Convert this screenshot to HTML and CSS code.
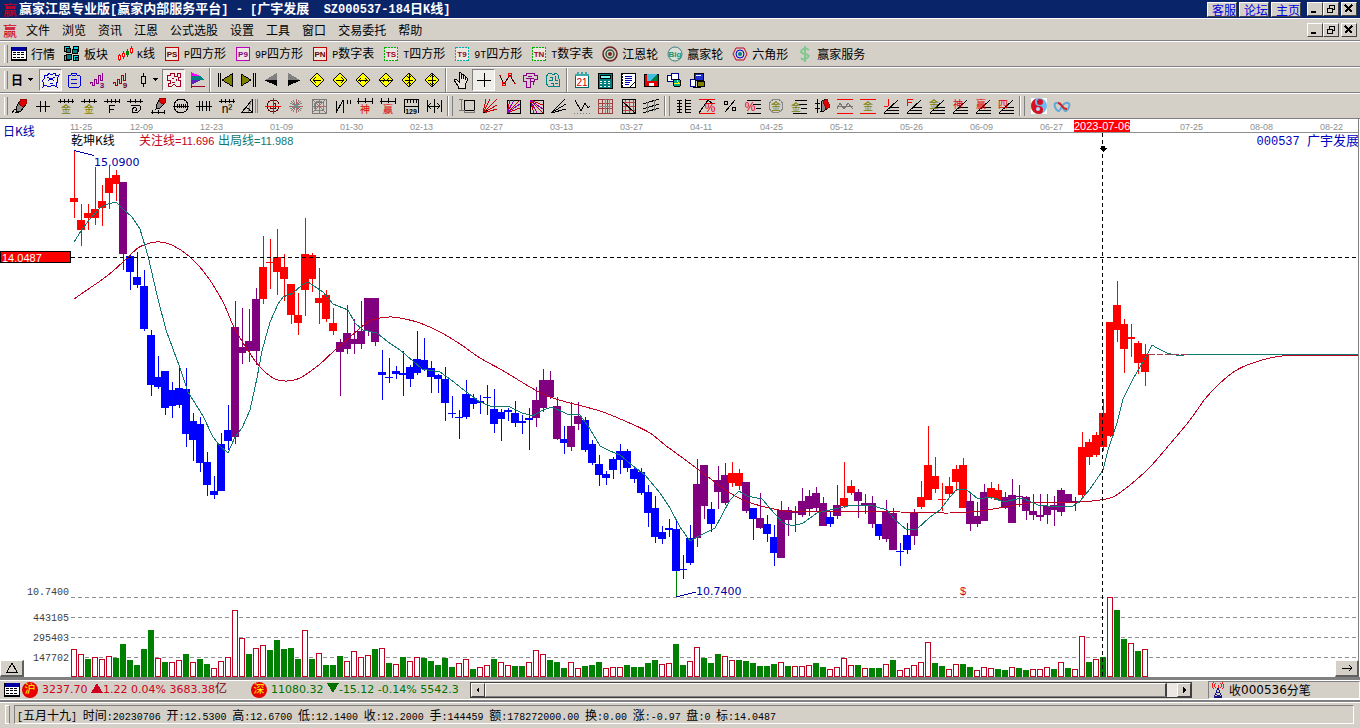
FILE: index.html
```
<!DOCTYPE html>
<html lang="zh-CN">
<head>
    <meta charset="UTF-8">
    <meta name="viewport" content="width=device-width, initial-scale=1.0">
    <title>赢家江恩专业版</title>
    <link rel="stylesheet" href="styles.css">
</head>
<body>
    <header class="titlebar">
        <span class="logo">赢</span>
        <h1>赢家江恩专业版<i>[</i>赢家内部服务平台<i>] - [</i>广宇发展<i>&nbsp; SZ000537-184</i>日<i>K</i>线<i>]</i></h1>
        <nav class="title-links">
            <a href="#">客服</a>
            <a href="#">论坛</a>
            <a href="#">主页</a>
        </nav>
        <div class="win-buttons">
            <button aria-label="最小化"><svg viewBox="0 0 10 10"><path d="M1 8h5" stroke-width="2"/></svg></button>
            <button aria-label="还原"><svg viewBox="0 0 10 10"><path d="M3 1h6M3.500 1v3M8.500 1v5M6 5.500h3M1 4h6M1.500 4v5M6.500 4v5M1 8.500h6"/></svg></button>
            <button class="close" aria-label="关闭"><svg viewBox="0 0 10 10"><path d="M1 1l7 7M8 1l-7 7" stroke-width="2"/></svg></button>
        </div>
    </header>

    <nav class="menubar">
        <span class="logo">赢</span>
        <button>文件</button>
        <button>浏览</button>
        <button>资讯</button>
        <button>江恩</button>
        <button>公式选股</button>
        <button>设置</button>
        <button>工具</button>
        <button>窗口</button>
        <button>交易委托</button>
        <button>帮助</button>
        <div class="win-buttons">
            <button aria-label="最小化"><svg viewBox="0 0 10 10"><path d="M1 8h5" stroke-width="2"/></svg></button>
            <button aria-label="还原"><svg viewBox="0 0 10 10"><path d="M3 1h6M3.500 1v3M8.500 1v5M6 5.500h3M1 4h6M1.500 4v5M6.500 4v5M1 8.500h6"/></svg></button>
            <button class="close" aria-label="关闭"><svg viewBox="0 0 10 10"><path d="M1 1l7 7M8 1l-7 7" stroke-width="2"/></svg></button>
        </div>
    </nav>

    <div class="toolbar labels">
        <button><svg viewBox="0 0 16 16"><path d="M0 1h16v13H0z" fill="#fff"/><path d="M0 1h16v3H0z" fill="#0000a0" stroke="#0000a0"/><path d="M.5 1v13M15.500 1v13M0 13.500h16" /><path d="M2 6.500h12M2 8.500h12M2 11.500h12" stroke-dasharray="3 1"/></svg>行情</button>
        <button><svg viewBox="0 0 16 16"><path d="M.5 .5h5v5h-5zM9.500 .5h5v5h-5zM.5 9.500h5v5h-5zM9.500 9.500h5v5h-5z" fill="#00e0e0"/><path d="M2.500 2.500h4v4h-4zM8.500 3.500h5v4h-5zM2.500 8.500h5v5h-5zM11.500 11.500h3v3h-3z" fill="#008080"/></svg>板块</button>
        <button><svg viewBox="0 0 16 16"><path d="M2.500 8v7M6.500 5v8M14.500 0v8" stroke="red"/><path d="M1.500 9.500h2v4h-2zM5.500 7.500h2v3h-2zM13.500 2.500h2v4h-2z" fill="#fff" stroke="red"/><path d="M10.500 3v8M9.500 5.500h2v3h-2z" fill="green" stroke="green"/></svg><span><i>K</i>线</span></button>
        <button><svg viewBox="0 0 16 16"><path d="M1.500 1.500h13v13h-13z" stroke="#c00000" fill="#ece8e0"/><text x="8" y="11" fill="#600000">PS</text></svg><span><i>P</i>四方形</span></button>
        <button><svg viewBox="0 0 16 16"><path d="M1.500 1.500h13v13h-13z" stroke="#c000c0" fill="#ece8e0"/><text x="8" y="11" fill="#800080">P9</text></svg><span><i>9P</i>四方形</span></button>
        <button><svg viewBox="0 0 16 16"><path d="M1.500 1.500h13v13h-13z" stroke="#c00000" fill="#ece8e0"/><text x="8" y="11" fill="#600000">PN</text></svg><span><i>P</i>数字表</span></button>
        <button><svg viewBox="0 0 16 16"><path d="M1.500 1.500h13v13h-13z" stroke="#00b000" stroke-dasharray="2 1" fill="#ece8e0"/><text x="8" y="11" fill="#a00020">TS</text></svg><span><i>T</i>四方形</span></button>
        <button><svg viewBox="0 0 16 16"><path d="M1.500 1.500h13v13h-13z" stroke="#00b0b0" stroke-dasharray="2 1" fill="#ece8e0"/><text x="8" y="11" fill="#a00020">T9</text></svg><span><i>9T</i>四方形</span></button>
        <button><svg viewBox="0 0 16 16"><path d="M1.500 1.500h13v13h-13z" stroke="#00b000" stroke-dasharray="2 1" fill="#ece8e0"/><text x="8" y="11" fill="#a00020">TN</text></svg><span><i>T</i>数字表</span></button>
        <button><svg class="smooth" viewBox="0 0 16 16"><circle cx="8" cy="8" r="7" stroke="#702020" stroke-width="1.500"/><circle cx="8" cy="8" r="4" stroke="#306040" stroke-width="1.500"/><circle cx="8" cy="8" r="1" stroke="#802020" stroke-width="2"/></svg>江恩轮</button>
        <button><svg class="smooth" viewBox="0 0 16 16"><circle cx="8" cy="8" r="7" stroke="#408080" fill="#d8e0d8"/><text x="8" y="11" fill="#209070">Big</text></svg>赢家轮</button>
        <button><svg class="smooth" viewBox="0 0 16 16"><path d="M1 8l3-6h8l3 6-3 6H4z" stroke="#c00020"/><circle cx="8" cy="8" r="4" stroke="#0000d0"/><circle cx="8" cy="8" r="1" stroke="#008080" stroke-width="2"/></svg>六角形</button>
        <button><svg class="smooth" viewBox="0 0 16 16"><path d="M12 4Q8 1 5 4T8 8T10 12T4 12M8 0V16" stroke="#80c890" stroke-width="2"/></svg>赢家服务</button>
    </div>

    <div class="toolbar icons">
        <button class="drop wide"><b>日</b><svg class="caret" viewBox="0 0 6 4"><path d="M0 0h6L3 3z"/></svg></button>
        <button class="on" aria-label="星座"><svg viewBox="0 0 18 18"><path d="M2 4l3 1 2-3 2 2 4-2 1 3 3-1-2 4 1 3-2 1 1 4-4-2-4 2-4-2-2 2 1-4-2-2 2-2zM5 6l4 2 4-2M6 10q3-3 6 0M8 12h3" stroke="#00c"/></svg></button>
        <button aria-label="剪贴板"><svg viewBox="0 0 18 18"><path d="M4 4h2l1-2h4l1 2h2l1 1v10l-1 1H4l-1-1V5zM7 4h4M6 8h6M6 12h6" stroke="#00d"/></svg></button>
        <button aria-label="三周期"><svg viewBox="0 0 18 18"><path d="M2 13v-2h2v3h2V8h2v4h2V4h2v5h2V2" stroke="#808"/><text x="14" y="17" fill="#606">3</text></svg></button>
        <button aria-label="九周期"><svg viewBox="0 0 18 18"><path d="M2 13v-2h2v3h2V8h2v4h2V4h2v5h2V2" stroke="#a00"/><text x="14" y="17" fill="#600">9</text></svg></button>
        <button class="drop"><svg viewBox="0 0 12 18"><path d="M7.500 2v3M7.500 13v3M5.500 5.500h4v7h-4z"/></svg><svg class="caret" viewBox="0 0 6 4"><path d="M0 0h6L3 3z"/></svg></button>
        <button class="on" aria-label="地图"><svg viewBox="0 0 18 18"><path d="M2 4h3V2h4v3h3V2h3v4h-2v3h2v6h-4l-2-2-2 2H3v-3h2V9H2zM7 7h2M11 8v2M7 11h3" stroke="#a00020"/></svg></button>
        <button aria-label="筹码"><svg viewBox="0 0 18 18"><path d="M3 1v16M3 15h14" stroke="#a00020"/><path d="M3 1l9 4H3z" fill="#f0f" stroke="none"/><path d="M3 5h9l5 4H3z" fill="#008080" stroke="none"/><path d="M3 9h10l-10 5z" fill="#6020c0" stroke="none"/></svg></button>
        <span class="sep"></span>
        <button aria-label="首条"><svg viewBox="0 0 18 18"><path d="M2 2v14M4 2v14"/><path d="M16 3v12L6 9z" fill="#808000"/></svg></button>
        <button aria-label="末条"><svg viewBox="0 0 18 18"><path d="M14 2v14M16 2v14"/><path d="M2 3v12l10-6z" fill="#808000"/></svg></button>
        <button aria-label="左移"><svg viewBox="0 0 18 18"><path d="M15 2v7H3z" fill="#808080" stroke="none"/><path d="M2 9h13v6z" fill="#000" stroke="none"/></svg></button>
        <button aria-label="右移"><svg viewBox="0 0 18 18"><path d="M3 2v7h12z" fill="#808080" stroke="none"/><path d="M16 9H3v6z" fill="#000" stroke="none"/></svg></button>
        <button aria-label="向左"><svg viewBox="0 0 18 18"><path d="M9 2l7 7-7 7-7-7z" fill="#ff0"/><path d="M5 9h8M8 6L5 9l3 3"/></svg></button>
        <button aria-label="向右"><svg viewBox="0 0 18 18"><path d="M9 2l7 7-7 7-7-7z" fill="#ff0"/><path d="M5 9h8M10 6l3 3-3 3"/></svg></button>
        <button aria-label="横向拉伸"><svg viewBox="0 0 18 18"><path d="M9 2l7 7-7 7-7-7z" fill="#ff0"/><path d="M4 9h10M7 7L5 9l2 2M11 7l2 2-2 2"/></svg></button>
        <button aria-label="横向压缩"><svg viewBox="0 0 18 18"><path d="M9 2l7 7-7 7-7-7z" fill="#ff0"/><path d="M3 9h12M6 7l2 2-2 2M12 7l-2 2 2 2"/></svg></button>
        <button aria-label="纵向压缩"><svg viewBox="0 0 18 18"><path d="M9 2l7 7-7 7-7-7z" fill="#ff0"/><path d="M9 3v12M5 9h8M7 5l2 2 2-2M7 13l2-2 2 2"/></svg></button>
        <button aria-label="纵向拉伸"><svg viewBox="0 0 18 18"><path d="M9 2l7 7-7 7-7-7z" fill="#ff0"/><path d="M9 3v12M5 9h8M7 6l2-2 2 2M7 12l2 2 2-2"/></svg></button>
        <span class="sep dark"></span>
        <button aria-label="拖动"><svg viewBox="0 0 18 18"><path d="M7 11L4 8 2 9l4 6v2h7v-3l2-4V7l-2-1v3-4l-2-1v4-5L9 3v5-6L7 1z" fill="#e8e4dc"/></svg></button>
        <button class="on" aria-label="十字光标"><svg viewBox="0 0 18 18"><path d="M9 2v14M2 9h14"/></svg></button>
        <button aria-label="连线"><svg viewBox="0 0 18 18"><path d="M2 5l4 8 6-9 5 9" stroke="#400"/><circle cx="6" cy="13" r="2" stroke="red"/><circle cx="12" cy="4" r="2" stroke="red"/><path d="M1 4h2M16 12h2" stroke="red"/></svg></button>
        <button aria-label="标注"><svg viewBox="0 0 18 18"><path d="M5 2h8v2h3v4h-3v2H9v6H5v-6H2V4h3zM7 5h4M5 7h8M9 7v3h3v4" stroke="#808"/></svg></button>
        <button aria-label="云图"><svg viewBox="0 0 18 18"><path d="M4 3l3-1 2 2 3-2 2 2v3l2 2-1 3 1 3-4 1-2-1-3 1-3-1-2-3 1-3-1-3zM6 6h2v3H5M11 5v4h3M7 12h2v3M11 12h3" stroke="#008080"/></svg></button>
        <span class="sep"></span>
        <button aria-label="日历"><svg viewBox="0 0 18 18"><path d="M2.500 4.500h13v12h-13z" fill="#fff" stroke="#066"/><path d="M2 4h14M4 2h2M8 2h2M12 2h2" stroke="#40a8a8" stroke-width="2"/><text class="day" x="9" y="15" fill="#d00000">21</text></svg></button>
        <button aria-label="计算器"><svg viewBox="0 0 18 18"><path d="M2 2h14v15H2z" fill="#008080"/><path d="M4 4h10v3H4z" fill="#7ff"/><path d="M4 10h2M8 10h2M12 10h2M4 12h2M8 12h2M12 12h2M4 15h2M8 15h2M12 15h2" stroke="#fff"/></svg></button>
        <button aria-label="记事本"><svg viewBox="0 0 18 18"><path d="M2 2h14v14H2z" fill="#fff"/><path d="M3 2v14" stroke-width="2" stroke-dasharray="2 1"/><path d="M6 5h7M6 7h7M6 9h7M6 11h5M6 13h4" stroke="#00a"/><path d="M16 11l-5 5"/></svg></button>
        <button aria-label="保存"><svg viewBox="0 0 18 18"><path d="M2 3h14v12H2z" fill="#e00000"/><path d="M5 3h10v7H5z" fill="#40c0e0" stroke="none"/><path d="M15 3v7H8z" fill="#008040" stroke="none"/><path d="M7 12h5v3H7z" fill="#fff" stroke="none"/></svg></button>
        <button aria-label="发送"><svg viewBox="0 0 18 18"><path d="M2 4h7v6H2z" fill="#fff" stroke="#008"/><path d="M6 2h7v6H6z" fill="#fff" stroke="#008"/><circle cx="12" cy="12" r="4" fill="#0a8"/><path d="M9 12h6M12 9l2 4" stroke="#ff0"/></svg></button>
        <button aria-label="联网"><svg viewBox="0 0 18 18"><path d="M6 2h9v7H6z" fill="#2030d0"/><path d="M8 4h5" stroke="#fff"/><path d="M2 8h5v7H2z" fill="#fff" stroke="#008"/><path d="M9 10h7v5H9z" fill="#808000"/><path d="M5 16h8"/></svg></button>
    </div>

    <div class="toolbar icons draw">
        <button aria-label="画笔"><svg viewBox="0 0 18 18"><path d="M10 2h5v5l-5 7-5 1 1-6z" fill="#888"/><path d="M10 2h5v5l-3 3-4-3z" fill="#e00000" stroke="#a00000"/><path d="M1 16q4-7 5 0l3-2"/></svg></button>
        <button aria-label="三等分"><svg viewBox="0 0 18 18"><path d="M2 9h14M6 4v11M11 4v11"/></svg></button>
        <button aria-label="金分割"><svg viewBox="0 0 18 18"><path d="M1 4h16M3 2v4M7 2v4M11 2v4M15 2v4"/><text class="han" fill="#808000" x="9" y="16">金</text></svg></button>
        <button aria-label="金分割二"><svg viewBox="0 0 18 18"><path d="M1 4h16M4 2v4M9 2v4M14 2v4"/><text class="han" fill="#808000" x="9" y="16">金</text></svg></button>
        <button aria-label="斐波那契"><svg viewBox="0 0 18 18"><path d="M1 4h16M4 2v4M8 2v4M12 2v4M16 2v4M6 16V8h6M6 12h5"/></svg></button>
        <button aria-label="螺旋"><svg viewBox="0 0 18 18"><path d="M1 4h16M4 2v4M9 2v4M14 2v4M5 8h8q4 4-1 7-5 2-6-1 0-4 4-3 2 2-1 3"/></svg></button>
        <button aria-label="画尺"><svg viewBox="0 0 18 18"><path d="M2 15h14M3 13v4M9 13v4M15 13v4"/><path d="M11 1h5v5l-5 5-4 1 1-5z" fill="#888"/><path d="M11 1h5v5l-3 1-3-3z" fill="#e00000" stroke="#a00000"/></svg></button>
        <button aria-label="圆周"><svg viewBox="0 0 18 18"><circle cx="9" cy="9" r="7"/><path d="M1 9h16M5 7v4M7 7v4M9 7v4M11 7v4M13 7v4"/></svg></button>
        <button aria-label="四等分"><svg viewBox="0 0 18 18"><path d="M1 9h16M4 4v10M7 4v10M11 4v10M14 4v10"/></svg></button>
        <button aria-label="平方"><svg viewBox="0 0 18 18"><path d="M1 4h16M3 2v4M7 2v4M11 2v4M15 2v4"/><text class="big" x="9" y="16">n²</text></svg></button>
        <button aria-label="三角"><svg viewBox="0 0 18 18"><path d="M1 15L11 3v12zM5 10l6 5"/><path d="M14 2v14M16 2v14M11 2L7 15" stroke="#888"/></svg></button>
        <button aria-label="圆心"><svg viewBox="0 0 18 18"><path d="M9 3a6 6 0 1 0 6 6M9 6a3 3 0 1 1-3 3M9 3q5 0 6 4" stroke="#600000"/><path d="M1 9h16M9 1v16" stroke="red"/></svg></button>
        <button aria-label="放射"><svg viewBox="0 0 18 18"><path d="M9 2v14M2 9h14M4 4l10 10M14 4L4 14" stroke="#b06060"/><path d="M6 3l6 12M12 3L6 15M3 6l12 6M15 6L3 12" stroke="#709090"/></svg></button>
        <button aria-label="方圆"><svg viewBox="0 0 18 18"><path d="M2 2h14v14H2zM5 5h8v8H5z" stroke="#777"/><path d="M2 2l14 14M16 2L2 16M9 2v14M2 9h14" stroke="#a07070"/><circle cx="9" cy="9" r="5" stroke="#788"/></svg></button>
        <button aria-label="波段"><svg viewBox="0 0 18 18"><path d="M3 4v12L10 3v13M14 3v4M17 3v4"/></svg></button>
        <button aria-label="神分割"><svg viewBox="0 0 18 18"><path d="M1 4h16M2 1v6M9 1v5M16 1v6"/><text class="han" x="9" y="16" fill="#e00000">神</text></svg></button>
        <button aria-label="赢分割"><svg viewBox="0 0 18 18"><path d="M1 4h16M2 1v6M9 1v5M16 1v6"/><text class="han" x="9" y="16" fill="#e00000">赢</text></svg></button>
        <button aria-label="标尺"><svg viewBox="0 0 18 18"><path d="M2 2h14M2 9h14M2 2v14M16 2v14M5 2v4M8 2v4M11 2v4M14 2v4"/><text class="tiny" x="9" y="17">129</text></svg></button>
        <button aria-label="区间"><svg viewBox="0 0 18 18"><path d="M2 3v12M9 2v14M16 3v12M3 9h12M6 6L3 9l3 3M12 6l3 3-3 3"/></svg></button>
        <span class="grip"></span>
        <button aria-label="箱体"><svg viewBox="0 0 18 18"><path d="M6 3h10v10H6z"/><path d="M1 2h4M3 2v11M1 13h5M6 16v-3M16 16v-3M6 15h10" stroke="#777"/></svg></button>
        <button aria-label="扇形"><svg viewBox="0 0 18 18"><path d="M2 16L5 2M2 16l7-14M2 16L16 2M2 16l14-8M2 16l14-4" stroke="#d00000"/><path d="M2 16l5-3"/></svg></button>
        <button aria-label="框扇"><svg viewBox="0 0 18 18"><path d="M3 3h13v13H3z"/><path d="M3 16L6 3M3 16L16 3M3 16l13-5" stroke="#d00000"/><path d="M3 16l7-13M3 16l13-9" stroke="#80c"/></svg></button>
        <button aria-label="下扇"><svg viewBox="0 0 18 18"><path d="M3 3h13v13H3z"/><path d="M3 3l4 13M3 3l13 13M3 3l13 5" stroke="#d00000"/><path d="M3 3l7 13M3 3l13 9" stroke="#80a"/></svg></button>
        <button aria-label="射线"><svg viewBox="0 0 18 18"><path d="M1 16L15 2M1 16l15-9M1 16l15-4"/></svg></button>
        <button aria-label="折线"><svg viewBox="0 0 18 18"><path d="M2 3l6 11 4-8 3 5 2-2"/><path d="M1 16h16" stroke="#777" stroke-dasharray="1 2"/></svg></button>
        <button aria-label="网格"><svg viewBox="0 0 18 18"><path d="M2 2h14v14H2zM2 6h14M2 11h14M6 2v14M11 2v14" stroke="#a04040"/><path d="M2 9h14M9 2v14M13 2v14" stroke="#888"/></svg></button>
        <button aria-label="价格网格"><svg viewBox="0 0 18 18"><path d="M6 2v14M10 2v14M14 2v14M3 5h13M3 9h13M3 13h13" stroke="#c04040"/><path d="M3 2v14h14M3 2h13v14M3 4l13 12"/></svg></button>
        <button aria-label="平行线"><svg viewBox="0 0 18 18"><path d="M1 7l16-5M1 12l16-5M1 16l16-5"/><path d="M5 5v11M12 3v11" stroke="#777"/></svg></button>
        <span class="grip"></span>
        <button aria-label="刻度"><svg viewBox="0 0 18 18"><path d="M2 3h5M2 6h5M2 9h5M2 12h5M2 15h5M10 3h6M10 6h6M10 9h6M10 12h6M10 15h6M4 3v12M10 2v14"/></svg></button>
        <button aria-label="百分线"><svg viewBox="0 0 18 18"><path d="M1 2h16M8 6h9M1 16h16" stroke="red"/><path d="M1 16L10 3l5 4"/><text class="big" x="12" y="15" fill="#e00000">%</text></svg></button>
        <button aria-label="百分比"><svg viewBox="0 0 18 18"><path d="M14 3L4 15"/><circle cx="5" cy="6" r="2"/><circle cx="13" cy="12" r="2"/></svg></button>
        <button aria-label="百分横线"><svg viewBox="0 0 18 18"><path d="M3 3h14M9 7h8M12 11h5M3 16h14"/><text class="big" x="6" y="14" fill="#e00000">%</text></svg></button>
        <button aria-label="金圈"><svg viewBox="0 0 18 18"><circle cx="9" cy="9" r="7" stroke="#888"/><text class="han" fill="#808000" x="9" y="13">金</text></svg></button>
        <button aria-label="金线"><svg viewBox="0 0 18 18"><path d="M5 3h12M9 7h8M11 11h6M3 16h14"/><text class="han" fill="#808000" x="6" y="14">金</text></svg></button>
        <button aria-label="价格笔"><svg viewBox="0 0 18 18"><path d="M4 2v14M2 6h5M2 11h5"/><path d="M9 4l4-2 4 7-6 5H8z" fill="#888"/><path d="M10 4l4-2 3 8-4 2z" fill="#e00000" stroke="#a00000"/></svg></button>
        <button aria-label="通道"><svg viewBox="0 0 18 18"><path d="M1 2h16M1 16h16" stroke="red"/><path d="M1 12l3-6 4 6 4-6 5 6M1 9h16" stroke="#777"/></svg></button>
        <button aria-label="金通道"><svg viewBox="0 0 18 18"><path d="M1 2h16M1 16h16" stroke="red"/><text class="han" fill="#808000" x="9" y="13">金</text></svg></button>
        <button aria-label="J线"><svg viewBox="0 0 18 18"><path d="M2 16L16 3M5 13h12M8 10h9M2 16h15"/><path d="M6 2v7l-2 1-2-1" stroke="red"/></svg></button>
        <button aria-label="F线"><svg viewBox="0 0 18 18"><path d="M2 16L16 3M5 13h12M8 10h9M2 16h15"/><path d="M2 9V2h6M2 5h5" stroke="red"/></svg></button>
        <button aria-label="金角线"><svg viewBox="0 0 18 18"><path d="M2 16L16 3M5 13h12M8 10h9M2 16h15"/><text class="han" fill="#808000" x="6" y="11">金</text></svg></button>
        <button aria-label="神角线"><svg viewBox="0 0 18 18"><path d="M2 16L16 3M5 13h12M8 10h9M2 16h15"/><text class="han" x="7" y="11" fill="#e00000">神</text></svg></button>
        <button aria-label="赢角线"><svg viewBox="0 0 18 18"><path d="M2 16L16 3M5 13h12M8 10h9M2 16h15"/><text class="han" x="7" y="11" fill="#e00000">赢</text></svg></button>
        <button aria-label="四角线"><svg viewBox="0 0 18 18"><path d="M2 16L16 3M5 13h12M8 10h9M2 16h15"/><text class="han" x="6" y="11" fill="#e00000">四</text></svg></button>
        <span class="grip"></span>
        <button aria-label="太极"><svg class="smooth" viewBox="0 0 18 18"><path d="M1 1h16v16H1z" fill="#fff" stroke="none"/><circle cx="9" cy="9" r="8" fill="#70b8f0" stroke="none"/><path d="M9 1a8 8 0 0 0 0 16 4 4 0 0 0 0-8 4 4 0 0 1 0-8z" fill="#d81020" stroke="none"/><circle cx="10" cy="5" r="3" fill="#d81020" stroke="none"/><circle cx="8" cy="12" r="2" fill="#b0d8f8" stroke="none"/></svg></button>
        <button aria-label="无穷"><svg class="smooth" viewBox="0 0 18 18"><path d="M9 9Q6 5 3 6T3 12T9 9" stroke="#60a8d8" stroke-width="2"/><path d="M9 9Q12 5 15 6T15 12T9 9" stroke="#60a8d8" stroke-width="2"/><path d="M5 6q2 0 4 3t5 3" stroke="#d02020" stroke-width="2"/></svg></button>
    </div>

    <main class="chart">
        <svg id="chart" viewBox="0 119 1360 558" role="img" aria-label="广宇发展 日K线"></svg>
        <button class="corner left" aria-label="展开"><svg viewBox="0 0 12 12"><path d="M6 1L1 10h10z"/></svg></button>
        <button class="corner right" aria-label="右移"><svg viewBox="0 0 12 12"><path d="M1 6h9M8 3l3 3-3 3"/></svg></button>
    </main>

    <section class="quotes">
        <div class="ticker">
            <svg class="sheet" viewBox="0 0 16 16"><path d="M0 1h16v13H0z" fill="#fff"/><path d="M0 1h16v3H0z" fill="#0000a0" stroke="#0000a0"/><path d="M.5 1v13M15.500 1v13M0 13.500h16"/><path d="M2 6.500h12M2 8.500h12M2 11.500h12" stroke-dasharray="3 1"/></svg>
            <span class="badge">沪</span>
            <span class="up">3237.70 <svg class="arrow" viewBox="0 0 12 10"><path d="M6 0l6 10H0z"/></svg>1.22 0.04% 3683.38<em>亿</em></span>
            <span class="badge">深</span>
            <span class="down">11080.32 <svg class="arrow" viewBox="0 0 12 10"><path d="M6 10l6-10H0z"/></svg>-15.12 -0.14% 5542.3</span>
        </div>
        <div class="scroll">
            <button aria-label="向左滚动"><svg viewBox="0 0 6 6"><path d="M4 0v6L1 3z"/></svg></button>
            <div class="thumb"></div>
            <button aria-label="向右滚动"><svg viewBox="0 0 6 6"><path d="M2 0v6l3-3z"/></svg></button>
        </div>
        <div class="receive">
            <svg class="tower" viewBox="0 0 14 18"><path d="M7 7L3 16h8zM5 12h4M4 14l6 2M2 17h10" stroke="#000080"/><path d="M7 3v4M4 1q-2 3 0 6M10 1q2 3 0 6M2 0q-3 4 0 8M12 0q3 4 0 8" stroke="red"/></svg>
            收<i>000536</i>分笔
        </div>
    </section>

    <footer class="status">
        <p><i>[</i>五月十九<i>]</i> <span>时间<i>:20230706</i></span> <span>开<i>:12.5300</i></span> <span>高<i>:12.6700</i></span> <span>低<i>:12.1400</i></span> <span>收<i>:12.2000</i></span> <span>手<i>:144459</i></span> <span>额<i>:178272000.00</i></span> <span>换<i>:0.00</i></span> <span>涨<i>:-0.97</i></span> <span>盘<i>:0</i></span> <span>标<i>:14.0487</i></span></p>
    </footer>
    <script src="script.js"></script>
</body>
</html>
```
FILE: styles.css
```
* {
    box-sizing: border-box;
}
body {
    margin: 0;
    min-height: 100vh;
    display: flex;
    flex-direction: column;
    background: #d4d0c8;
    color: #000;
    font: 12px/14px "Noto Sans CJK SC", sans-serif;
    overflow-x: hidden;
}
i, em {
    font-style: normal;
}
i {
    font-family: "Liberation Mono", monospace;
    font-size: 10px;
}
button {
    display: flex;
    align-items: center;
    justify-content: center;
    padding: 0;
    border: 0;
    background: none;
    color: inherit;
    font: inherit;
    white-space: nowrap;
}
svg {
    display: block;
    flex: none;
    fill: none;
    stroke: #000;
    shape-rendering: crispEdges;
}
svg.smooth {
    shape-rendering: auto;
}

/* title and menu */
.titlebar {
    display: flex;
    align-items: center;
    height: 19px;
    padding: 0 3px;
    background: #0a246a;
    border-bottom: 1px solid #fff;
    color: #fff;
}
.titlebar h1 {
    margin: 0;
    font-size: 13px;
    line-height: 18px;
    font-weight: bold;
    white-space: pre;
}
.titlebar h1 i {
    font-size: 12px;
}
.logo {
    width: 16px;
    color: #d00020;
    font-size: 14px;
    line-height: 18px;
}
.title-links {
    display: flex;
    gap: 2px;
    margin-left: auto;
}
.title-links a {
    width: 30px;
    height: 15px;
    border: 1px solid #fff;
    border-right-color: #404040;
    border-bottom-color: #404040;
    background: #d4d0c8;
    color: #0000e0;
    line-height: 13px;
    text-align: right;
    text-decoration: none;
}
.win-buttons {
    display: flex;
    margin-left: 6px;
}
.win-buttons button {
    width: 16px;
    height: 14px;
    background: #d4d0c8;
    border: 1px solid #fff;
    border-right-color: #404040;
    border-bottom-color: #404040;
}
.win-buttons .close {
    margin-left: 2px;
}
.win-buttons svg {
    width: 10px;
    height: 10px;
}
.menubar {
    display: flex;
    align-items: center;
    gap: 12px;
    height: 22px;
    padding: 0 3px;
    border-bottom: 1px solid #808080;
}
.menubar .logo {
    width: 11px;
}
.menubar .win-buttons {
    margin-left: auto;
}

/* toolbars */
.toolbar {
    position: relative;
    display: flex;
    align-items: center;
    height: 26px;
    border-top: 1px solid #fff;
    border-bottom: 1px solid #808080;
}
.toolbar::before {
    content: "";
    position: absolute;
    left: 4px;
    top: 3px;
    bottom: 3px;
    width: 2px;
    border-left: 1px solid #fff;
    border-right: 1px solid #808080;
}
.labels {
    gap: 9px;
    padding-left: 11px;
}
.labels button {
    gap: 4px;
}
.labels svg {
    width: 16px;
    height: 16px;
}
.toolbar text {
    stroke: none;
    font: bold 8px "Liberation Sans", sans-serif;
    text-anchor: middle;
}
.toolbar text:not([fill]) {
    fill: #000;
}
.toolbar .tiny {
    font-size: 7px;
}
.toolbar .day {
    font-weight: normal;
    font-size: 10px;
}
.toolbar .han {
    font: 10px "Noto Sans CJK SC", sans-serif;
}
.toolbar .big {
    font-weight: normal;
    font-size: 12px;
}
.icons {
    padding-left: 5px;
}
.icons button {
    width: 23px;
    height: 22px;
    flex: none;
}
.icons button > svg {
    width: 18px;
    height: 18px;
}
.icons .drop {
    width: 31px;
    gap: 4px;
}
.icons .drop > svg {
    width: 12px;
}
.icons .wide {
    width: 34px;
}
.icons .drop > .caret {
    width: 6px;
    height: 4px;
    fill: #000;
    stroke: none;
}
.icons .on {
    border: 1px solid #808080;
    border-right-color: #fff;
    border-bottom-color: #fff;
    background: #f0eeea;
}
.sep {
    width: 2px;
    height: 24px;
    margin: 0 2px 0 1px;
    border-left: 1px solid #808080;
    border-right: 1px solid #fff;
}
.sep.dark, .dark ~ .sep {
    margin: 0 2px;
}
.draw {
    padding-left: 8px;
}
.grip {
    width: 6px;
    height: 20px;
    margin: 0 2px;
    border-left: 1px solid #808080;
    border-right: 1px solid #808080;
    box-shadow: inset 1px 0 #fff;
}

/* chart */
.chart {
    position: relative;
    background: #fff;
}
#chart {
    width: 100%;
    height: auto;
}
#chart text {
    stroke: none;
    font: 11px "Liberation Sans", "Noto Sans CJK SC", sans-serif;
    white-space: pre;
}
#chart .han {
    font-family: "Noto Sans CJK SC", sans-serif;
    font-size: 12px;
}
#chart .date {
    fill: #909090;
    font-size: 9px;
}
#chart .axis {
    fill: #404040;
    font: 10px "Liberation Mono", monospace;
    text-anchor: end;
}
#chart .price {
    fill: #0000a0;
    font-family: "DejaVu Sans", sans-serif;
}
#chart .code {
    fill: #0000c0;
    font: 12px "Liberation Mono", "Noto Sans CJK SC", monospace;
    text-anchor: end;
}
#chart .code .han {
    font-size: 13px;
}
.corner {
    position: absolute;
    bottom: 0;
    width: 24px;
    height: 17px;
    background: #d4d0c8;
    border: 1px solid #fff;
    border-right: 2px solid #606060;
    border-bottom: 2px solid #606060;
}
.corner svg {
    width: 12px;
    height: 12px;
}
.corner.left {
    left: 0;
}
.corner.right {
    right: 1px;
}

/* index quotes and scrollbar */
.quotes {
    display: flex;
    align-items: center;
    height: 25px;
    border-top: 3px solid #808080;
    border-bottom: 2px solid #808080;
    box-shadow: inset 0 1px #fff, inset 0 -1px #fff;
}
.ticker {
    display: flex;
    align-items: center;
    width: 468px;
    padding-left: 4px;
    white-space: nowrap;
    font: 11px/16px "DejaVu Sans", "Noto Sans CJK SC", sans-serif;
}
.ticker .sheet {
    width: 16px;
    height: 16px;
    margin-right: 2px;
}
.badge {
    flex: none;
    width: 16px;
    height: 16px;
    margin-right: 4px;
    border-radius: 50%;
    background: #e80000;
    color: #ff0;
    font-size: 11px;
    line-height: 15px;
    text-align: center;
}
.arrow {
    display: inline-block;
    width: 12px;
    height: 10px;
    fill: currentColor;
    stroke: none;
}
.ticker em {
    color: #800000;
    font-size: 12px;
    line-height: 14px;
}
.up {
    margin-right: 24px;
    color: #d00020;
}
.down {
    color: #007000;
}
.scroll {
    flex: 1;
    display: flex;
    height: 16px;
    margin: 0 16px 0 2px;
    border: 1px solid #404040;
    background: #ece9e4;
}
.scroll button {
    width: 14px;
    background: #d4d0c8;
    border: 1px solid #fff;
    border-right-color: #404040;
    border-bottom-color: #404040;
}
.scroll svg {
    width: 6px;
    height: 6px;
    fill: #000;
    stroke: none;
}
.thumb {
    flex: 1;
    margin-right: 10px;
    background: #d4d0c8;
    border: 1px solid #fff;
    border-right: 2px solid #404040;
    border-bottom-color: #808080;
}
.receive {
    display: flex;
    align-items: center;
    width: 152px;
    height: 18px;
    border: 1px solid #808080;
    border-right-color: #fff;
    border-bottom-color: #fff;
}
.receive .tower {
    width: 14px;
    height: 16px;
    margin: 0 4px 0 2px;
}
.receive i {
    font: 12px "DejaVu Sans", sans-serif;
}

/* status line */
.status {
    height: 26px;
    padding: 2px 6px 4px 5px;
    border-top: 1px solid #fff;
    display: flex;
    gap: 4px;
}
.status::before {
    content: "";
    width: 3px;
    border: 1px solid #fff;
    border-right-color: #808080;
}
.status p {
    flex: 1;
    margin: 0;
    padding-left: 2px;
    border: 1px solid #808080;
    border-right-color: #fff;
    border-bottom-color: #fff;
    line-height: 17px;
    white-space: nowrap;
}
.status span {
    margin-left: 3px;
}
```
FILE: script.js
```
// high, body top, body bottom, low, candle colour, volume, volume colour
const bars = `
150 198 202 218 r 28 r|204 220 230 246 r 23 r|204 213 218 230 r 18 g|167 209 218 225 r 20 r|185 201 208 226 r 18 r
166 178 193 209 r 21 r|170 175 184 201 r 19 g|182 182 254 270 p 33 g|254 256 272 290 b 17 g|252 277 285 288 b 12 g
270 286 329 331 b 28 g|330 335 385 396 b 47 g|356 377 387 389 b 19 r|371 371 408 415 b 15 g|382 390 406 418 b 15 r
368 388 405 408 b 17 r|368 389 434 447 b 23 g|413 421 440 461 b 15 r|417 424 463 472 b 18 g|452 462 485 496 b 13 g
476 491 495 499 b 9 r|433 444 491 491 b 16 r|405 430 441 450 b 20 r|301 327 437 444 p 67 r|308 347 353 364 p 39 r
309 341 351 362 p 23 g|288 299 351 365 p 29 r|236 267 299 304 r 32 r|239 262 263 289 r 27 g|229 257 272 295 r 37 g
254 267 279 301 r 28 g|284 284 315 324 r 29 g|293 315 323 335 r 18 g|218 254 290 316 r 47 r|253 255 279 292 r 18 g
268 298 303 324 r 24 r|290 295 319 322 r 12 g|308 323 331 335 r 12 g|339 342 352 396 p 21 g|305 333 349 354 p 16 r
319 339 344 354 p 26 r|301 331 344 349 p 20 r|298 298 331 336 p 22 r|298 298 342 346 p 28 g|350 372 375 400 b 29 r
358 377 378 383 b 14 g|366 371 374 379 b 13 r|351 373 375 396 b 20 g|365 367 379 387 b 16 r|331 359 373 375 b 20 r
338 360 369 371 b 19 g|361 368 377 393 b 16 g|374 375 379 393 b 12 g|367 379 403 421 b 19 g|396 413 414 418 b 10 g
410 417 418 439 b 14 r|380 394 417 419 b 18 r|394 398 404 409 b 8 g|395 401 403 414 b 10 r|385 397 398 415 b 12 r
389 409 424 433 b 18 g|409 412 419 441 b 15 r|408 410 412 421 b 12 r|401 413 423 427 b 11 g|415 421 423 434 b 11 g
408 418 420 450 b 15 r|387 400 418 427 p 27 r|369 380 408 412 p 23 r|371 380 397 399 p 17 g|397 406 439 440 p 15 g
426 439 443 454 b 9 g|402 426 447 451 p 15 r|402 416 424 430 p 9 r|417 420 450 452 b 11 g|440 444 463 465 b 12 g
455 464 475 486 b 15 g|471 474 478 485 b 9 r|457 459 470 479 b 10 r|444 451 460 474 b 10 r|449 451 468 472 b 12 g
466 469 479 483 b 10 g|468 472 493 495 b 10 g|485 492 513 527 b 14 g|496 508 537 543 b 17 g|526 532 539 544 b 13 r
519 528 530 537 b 14 r|519 529 571 597 b 33 g|555 569 570 579 b 12 g|525 538 563 565 b 16 r|459 484 538 547 p 30 r
465 465 506 519 p 19 g|502 509 524 532 b 14 g|466 480 492 509 p 23 g|463 475 503 505 p 21 r|462 473 483 487 r 17 r
469 473 486 490 r 17 g|482 482 511 513 p 16 g|508 508 519 540 b 14 g|493 518 528 529 p 11 g|515 524 534 542 b 11 g
525 537 553 566 b 13 g|501 510 558 558 p 15 r|507 510 520 536 p 11 g|506 511 513 532 p 11 r|488 501 515 517 p 11 r
490 496 509 516 p 12 r|487 493 508 512 p 14 g|497 503 526 526 p 10 g|512 517 524 527 b 8 r|485 505 516 519 p 10 r
462 498 506 508 r 19 r|480 486 493 495 r 12 r|489 492 501 518 p 12 g|494 503 506 514 p 9 r|496 503 524 528 p 9 g
524 524 536 540 b 9 g|500 511 539 542 p 13 r|508 513 550 550 p 17 g|543 551 552 566 b 7 r|523 535 550 554 b 9 r
509 512 536 545 p 12 r|481 497 507 509 r 15 r|426 465 500 500 r 35 r|457 476 489 493 r 14 g|483 499 500 511 r 11 g
477 486 494 497 r 8 r|465 469 482 491 r 13 r|458 465 508 508 r 13 g|494 501 524 531 p 10 g|502 516 524 527 p 7 r
484 492 521 521 p 10 r|482 488 497 499 r 9 r|484 490 500 501 r 8 g|492 497 508 509 p 7 g|479 495 523 523 p 10 r
485 496 497 507 p 9 g|496 497 511 520 p 7 g|494 511 515 520 p 8 r|494 515 517 521 p 8 r|494 506 515 524 p 10 r
496 505 510 526 p 8 g|488 490 512 516 p 15 r|494 494 502 502 p 9 g|497 501 502 511 p 8 r|432 447 495 499 r 41 r
439 442 457 465 r 15 g|432 435 455 457 r 18 r|399 413 447 451 r 20 g|322 322 436 437 r 80 r|281 305 330 342 r 67 g
319 324 349 373 r 38 g|324 337 339 357 r 34 r|341 343 363 374 r 26 g|344 354 372 386 r 28 r`
    .trim().split(/[|\n]/).map(row => row.split(' '));

const slowLine = '74,299 87,290 107,276 123,262 138,248 150,243 160,242 172,245 190,257 207,276 223,302 233,325 245,346 260,367 275,379 287,381 300,378 320,364 336,349 350,337 368,322 380,318 392,317 405,319 420,323 440,332 460,344 480,358 500,369 520,381 537,391 550,397 570,403 600,411 625,421 650,433 665,445 680,456 695,467 712,480 730,493 745,501 765,507 785,511 800,512 850,511 900,512 950,513 980,511 1010,506 1030,503 1080,502 1100,500 1113,497 1130,485 1150,467 1170,444 1190,420 1205,399 1218,385 1235,371 1250,364 1270,358 1290,355 1358,355';
const fastLine = '74,242 81,231 90,219 100,208 108,204 116,202 123,209 132,217 140,229 148,256 157,295 166,330 180,368 188,392 203,416 213,437 220,446 228,453 235,437 242,428 250,410 257,378 262,351 270,322 278,304 283,297 293,293 302,285 308,282 323,292 333,304 348,310 355,323 363,330 377,333 388,342 400,350 413,361 422,369 440,372 450,379 465,391 480,402 493,407 508,406 522,413 533,416 543,410 552,407 567,414 580,415 590,429 600,446 610,451 620,455 633,466 645,475 660,493 670,508 680,527 690,541 705,533 715,528 722,515 730,500 739,491 747,496 762,499 775,514 783,523 793,526 803,523 817,513 830,510 843,507 853,505 870,505 887,510 895,520 907,530 917,529 930,517 940,510 950,497 957,489 967,490 978,499 992,497 1003,502 1022,498 1038,505 1048,506 1073,506 1080,501 1090,489 1103,470 1108,450 1117,423 1123,399 1133,379 1140,367 1148,353 1152,345 1157,348 1167,353 1180,356 1187,354 1358,354';

const colours = { r: '#ff0000', p: '#800080', b: '#0000ff' };
const base = 677;
let out = '';

// date axis
out += '<path d="M71 132.500H1358" stroke="#909090"/>';
const dates = ['11-25', '12-09', '12-23', '01-09', '01-30', '02-13', '02-27', '03-13', '03-27', '04-11', '04-25', '05-12', '05-26', '06-09', '06-27', '', '07-25', '08-08', '08-22'];
dates.forEach((date, i) => {
    out += `<text class="date" x="${i ? 60 + i * 70 : 70}" y="130">${date}</text>`;
});

// grid
[597, 617, 637, 657].forEach(y => {
    out += `<path d="M71 ${y + 0.5}H1358" stroke="#909090" stroke-dasharray="4 3"/>`;
});
[['10.7400', 595], ['443105', 621], ['295403', 641], ['147702', 661]].forEach(([label, y]) => {
    out += `<text class="axis" x="69" y="${y}">${label}</text>`;
});

// candles and volume
bars.forEach(([high, top, bottom, low, colour, volume, side], i) => {
    const x = 74 + i * 7;
    const fill = colours[colour];
    out += `<path d="M${x + 0.5} ${high}V${low}" stroke="${fill}"/>`;
    out += `<rect x="${x - 4}" y="${top}" width="8" height="${Math.max(1, bottom - top)}" fill="${fill}" stroke="none"/>`;
    if (side === 'g') {
        out += `<rect x="${x - 3}" y="${base - volume}" width="6" height="${volume}" fill="#008000" stroke="none"/>`;
    } else {
        out += `<rect x="${x - 2.5}" y="${base - volume + 0.5}" width="5" height="${volume - 1}" fill="#fff" stroke="#c00020"/>`;
    }
});
out += '<path d="M676.500 571V597" stroke="#008000"/>';

// curve through all points of an average line
function curve(line) {
    const p = line.split(' ').map(pair => pair.split(',').map(Number));
    let d = `M${p[0]}`;
    for (let i = 0; i < p.length - 1; i++) {
        const a = p[i - 1] || p[i], b = p[i], c = p[i + 1], e = p[i + 2] || c;
        const k = (c[0] - b[0]) / 3;
        const s1 = (c[1] - a[1]) / (c[0] - a[0]);
        const s2 = (e[1] - b[1]) / (e[0] - b[0]);
        d += `C${b[0] + k},${b[1] + k * s1} ${c[0] - k},${c[1] - k * s2} ${c}`;
    }
    return d;
}
out += `<path d="${curve(slowLine.replace(' 1358,355', ''))}H1358" stroke="#c00020"/><polyline points="${fastLine}" stroke="#107870"/>`;
out += '<path d="M1149 354.500h38" stroke="#a04050" stroke-dasharray="6 2"/>';

// crosshair
out += '<path d="M71 257.500H1358M1102.500 133V677" stroke-dasharray="4 3"/>';
out += '<path d="M1099 148h8l-4 4zM1101 146h4v2h-4z" fill="#000" stroke="none"/>';
out += '<rect x="0.500" y="251.500" width="70" height="11" fill="#f00"/><text x="2" y="262" fill="#fff">14.0487</text>';
out += '<rect x="1074" y="120" width="56" height="12" fill="#f00" stroke="none"/><text x="1074" y="130" fill="#fff">2023-07-06</text>';

// labels
out += '<path d="M74 150.500l20 5M676 597l20-5" stroke="#0000a0"/>';
out += '<text class="price" x="94" y="166">15.0900</text><text class="price" x="696" y="595">10.7400</text>';
out += '<text x="3" y="136" fill="#0000a0"><tspan class="han">日K线</tspan></text>';
out += '<text x="71" y="145" fill="#000"><tspan class="han">乾坤K线</tspan></text>';
out += '<text x="139" y="145" fill="#c00020"><tspan class="han">关注线</tspan>=11.696</text>';
out += '<text x="218" y="145" fill="#107870"><tspan class="han">出局线</tspan>=11.988</text>';
out += '<text class="code" x="1359" y="145">000537 <tspan class="han">广宇发展</tspan></text>';
out += '<text x="960" y="595" fill="#d00020">$</text>';
out += '<path d="M1358.500 119V677" stroke="#808080"/>';

document.getElementById('chart').innerHTML = out;
```
